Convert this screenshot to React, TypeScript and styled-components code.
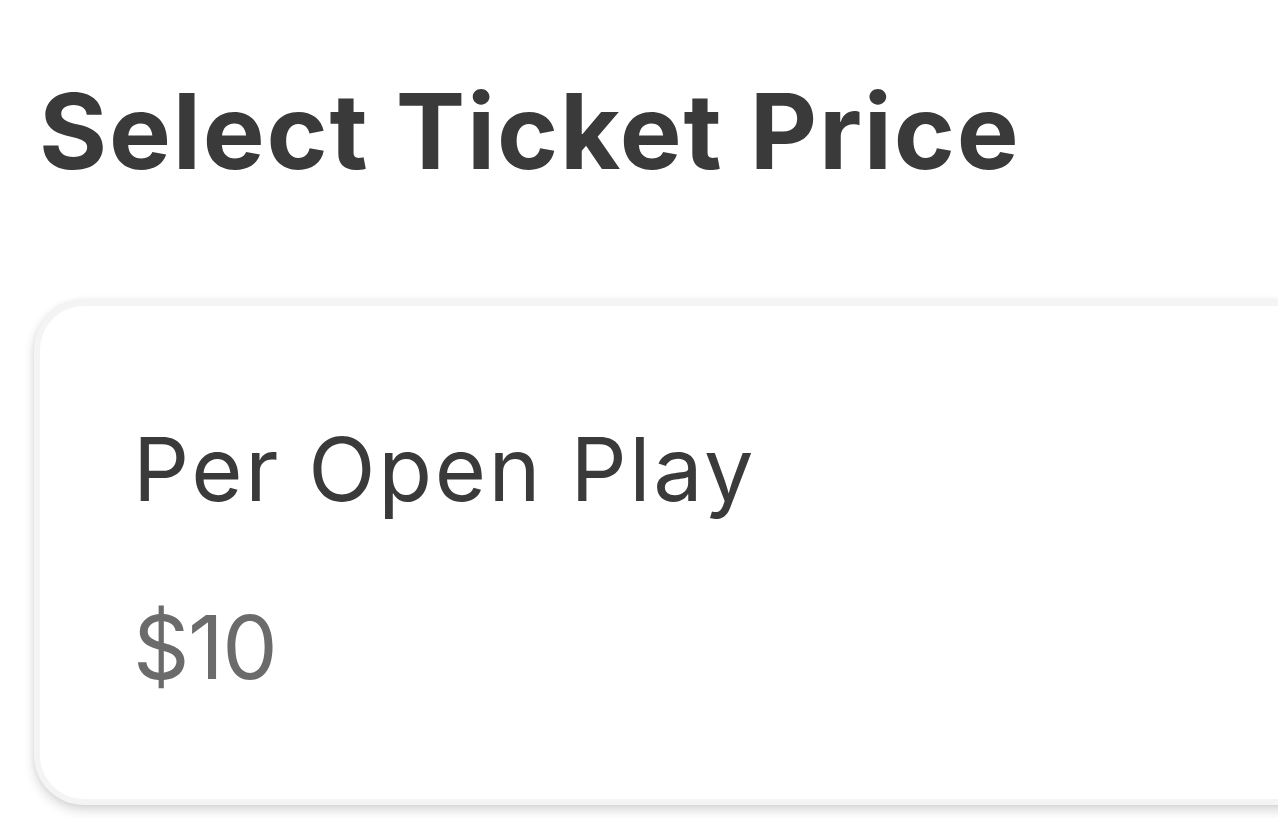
import React from 'react';
import styled, { createGlobalStyle } from 'styled-components';

const GlobalStyle = createGlobalStyle`
  html, body {
    margin: 0;
    padding: 0;
    background: #ffffff;
    overflow: hidden;
  }
  body {
    font-family: Inter, "Noto Sans", sans-serif;
    color: #3a3a3a;
  }
`;

const Page = styled.div`
  width: 1278px;
  height: 818px;
  padding: 0 0 0 34px;
  box-sizing: border-box;
  display: flex;
  flex-direction: column;
  overflow: hidden;
`;

const Title = styled.h1`
  margin: 79px 0 0 5px;
  font-size: 104px;
  font-weight: 700;
  line-height: 1;
  letter-spacing: 1.8px;
  color: #3a3a3a;
  white-space: nowrap;
`;

const Card = styled.div`
  margin-top: 117px;
  width: 1400px;
  height: 505px;
  flex-shrink: 0;
  box-sizing: border-box;
  border: 6px solid #f4f4f4;
  border-right: none;
  border-radius: 50px 0 0 50px;
  background: #ffffff;
  box-shadow: 0 5px 12px rgba(0, 0, 0, 0.16), 0 0 5px rgba(0, 0, 0, 0.05);
  padding: 119px 0 0 93px;
  display: flex;
  flex-direction: column;
  gap: 90px;
`;

const Label = styled.div<{ $muted?: boolean }>`
  font-size: 88px;
  font-weight: 400;
  line-height: 1;
  letter-spacing: ${p => (p.$muted ? '-1.5px' : '2.6px')};
  color: ${p => (p.$muted ? '#6b6b6b' : '#3a3a3a')};
  white-space: nowrap;
`;

export default function App() {
  return (
    <>
      <GlobalStyle />
      <Page>
        <Title>Select Ticket Price</Title>
        <Card>
          <Label>Per Open Play</Label>
          <Label $muted>$10</Label>
        </Card>
      </Page>
    </>
  );
}
